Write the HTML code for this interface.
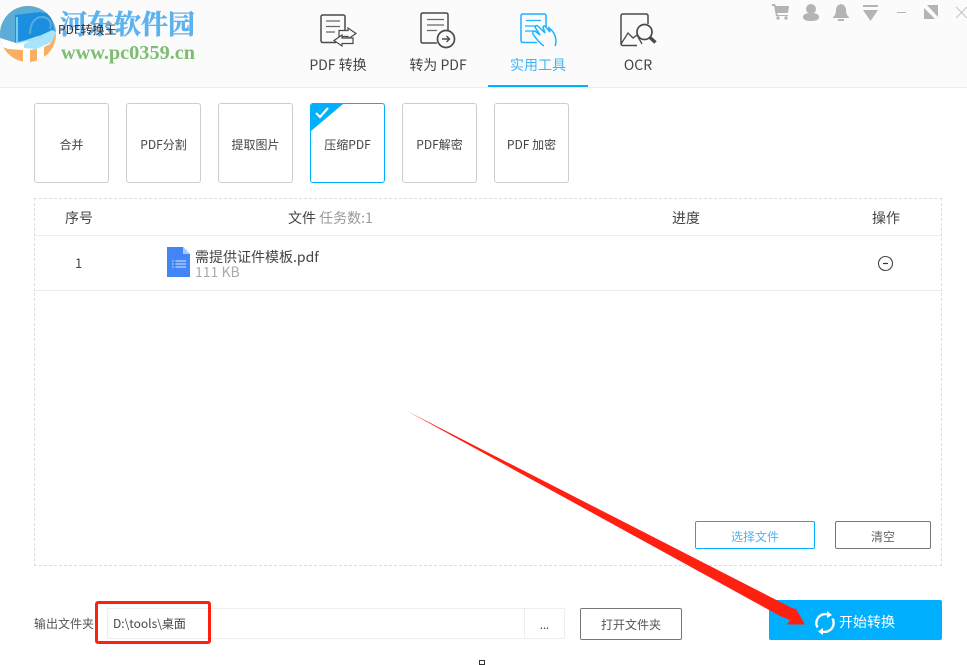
<!DOCTYPE html>
<html><head><meta charset="utf-8">
<style>
html,body{margin:0;padding:0;background:#fff}
body{width:967px;height:663px;position:relative;overflow:hidden;font-family:"Noto Sans CJK SC","Liberation Sans",sans-serif;color:#444}
.a{position:absolute;white-space:nowrap}
.c{position:absolute;text-align:center;white-space:nowrap}
.tile{position:absolute;top:103px;width:73px;height:78px;border:1px solid #cdcdcd;border-radius:3px;text-align:center;line-height:82px;font-size:12px;color:#444;box-sizing:content-box}
</style></head>
<body>
<div class="a" style="left:0;top:0;width:967px;height:87px;background:#fbfbfb;border-bottom:1px solid #eee"></div>

<!-- logo -->
<svg class="a" style="left:0;top:0" width="70" height="70" viewBox="0 0 70 70">
<defs><clipPath id="lc"><circle cx="28" cy="34" r="28"/></clipPath></defs>
<g clip-path="url(#lc)">
<rect x="0" y="0" width="60" height="70" fill="#f9ae62"/>
<path d="M0 0H60V32L30 46L0 44Z" fill="#5cacd8"/>
<path d="M15 15L40 12L50 14L54 30L20 42L15 44Z" fill="#1a8fe0"/>
<path d="M0 38L16 43L54 32L56 33L50 44L44 47V64H37V49L30 50V64H23V50L8 49L0 46Z" fill="#fff"/>
<path d="M24 44L52 30L56 32L52 42L36 49L24 48Z" fill="#a8e4fb"/>
<path d="M17 17V43L44 37" fill="none" stroke="#9fdcf5" stroke-width="1.5"/>
<path d="M30 34C30 22 36 17 42 17C50 17 52 24 50 29" fill="none" stroke="#5cacd8" stroke-width="2"/>
</g>
</svg>
<div class="a" style="left:60px;top:7px;font:bold 27px/32px 'Noto Serif CJK SC','Liberation Serif',serif;color:#5db2ee;-webkit-text-stroke:.5px #5db2ee">河东软件园</div>
<div class="a" style="left:61px;top:42px;font:bold 20.3px/22px 'Liberation Serif',serif;color:#7dbd70">www.pc0359.cn</div>
<div class="a" style="left:58px;top:21px;font-size:12px;line-height:17px;color:#333">PDF转换王</div>

<!-- tab icons -->
<svg class="a" style="left:300px;top:0" width="370" height="60" viewBox="0 0 370 60" fill="none">
<g stroke="#4a4a4a" stroke-width="1.5">
<path d="M36 42.500H23Q21 42.500 21 40.500V17Q21 15 23 15H43Q45 15 45 17V30"/>
<path d="M26 21H40M26 26.500H40M26 32H35" stroke="#666" stroke-width="1.300"/>
<path d="M39 30.500H48V28L56 33.500L48 39V36.500H39Z" fill="#fbfbfb" stroke-width="1.200"/>
<path d="M53 38H42V35L34 40.500L42 46V43.500H53Z" fill="#fbfbfb" stroke-width="1.200"/>
</g>
<g stroke="#4a4a4a" stroke-width="1.5">
<path d="M137 43H123Q121 43 121 41V15Q121 13 123 13H146Q148 13 148 15V30"/>
<path d="M127 19.500H144M127 25H144M127 30.500H137" stroke="#666" stroke-width="1.300"/>
<circle cx="146" cy="39" r="8.500" fill="#fbfbfb" stroke-width="1.700"/>
<path d="M142 39H149.500M146.500 36L149.500 39L146.500 42" stroke-width="1.400"/>
</g>
<g stroke="#1ab3ff" stroke-width="1.500">
<path d="M237 42.500H223Q221 42.500 221 40.500V16Q221 14 223 14H244Q246 14 246 16V27"/>
<path d="M226 20.500H241M225 26H237M225 31H233" stroke-width="1.300"/>
<path d="M244 46Q239 43 233 34Q232 31 235 31L240 35L235 27Q235 25 238 26L245 33L243 27Q244 25 246 27L250 32L249 28Q256 33 256 42Q256 44 255 46" fill="#fbfbfb"/>
</g>
<g stroke="#4a4a4a" stroke-width="1.500">
<path d="M337 45.500H323Q321 45.500 321 43.500V16Q321 14 323 14H346Q348 14 348 16V24"/>
<path d="M321 44L328 33L333 38L337 35L342 44" stroke-width="1.300"/>
<circle cx="344.500" cy="32" r="7.500" fill="#fbfbfb" stroke-width="1.700"/>
<path d="M350 37.500L355.500 42.500" stroke-width="3.400"/>
</g>
</svg>
<div class="c" style="left:298px;top:56px;width:80px;font-size:14px;line-height:18px;color:#444">PDF 转换</div>
<div class="c" style="left:398px;top:56px;width:80px;font-size:14px;line-height:18px;color:#444">转为 PDF</div>
<div class="c" style="left:498px;top:56px;width:80px;font-size:14px;line-height:18px;color:#3db5fa">实用工具</div>
<div class="c" style="left:598px;top:56px;width:80px;font-size:14px;line-height:18px;color:#444">OCR</div>
<div class="a" style="left:488px;top:85px;width:100px;height:2px;background:#00b0ff"></div>

<!-- window controls -->
<svg class="a" style="left:760px;top:0" width="207" height="24" viewBox="0 0 207 24">
<g fill="#b4b4b4">
<path d="M12 4H15L16 6H29L28 13H17L18 15H28V16H16L14 6H12Z"/><circle cx="18" cy="18" r="1.700"/><circle cx="26" cy="18" r="1.700"/>
<circle cx="51" cy="9" r="5"/><path d="M43 17Q43 13 51 13Q59 13 59 17Q59 21 51 21Q43 21 43 17Z"/>
<path d="M73 17Q76 15 76 10Q76 5 81 4Q86 5 86 10Q86 15 89 17V18H73Z"/><rect x="78" y="19" width="6" height="2"/>
<rect x="103" y="5" width="15" height="2"/><path d="M103 10H118L110.500 21Z"/>
<rect x="137" y="12" width="9" height="1"/>
<path d="M167 5H178V17Z"/><path d="M164 8V19H175Z"/>
</g>
<path d="M196 7L207 18M207 7L196 18" stroke="#c4c4c4" stroke-width="1"/>
</svg>

<!-- tiles -->
<div class="tile" style="left:34px">合并</div>
<div class="tile" style="left:126px">PDF分割</div>
<div class="tile" style="left:218px">提取图片</div>
<div class="tile" style="left:310px;border-color:#00b0ff;overflow:hidden">压缩PDF
<svg style="position:absolute;left:0;top:0" width="34" height="28"><path d="M0 0H32L0 27Z" fill="#00b0ff"/><path d="M5 9L9 13L17 4" fill="none" stroke="#fff" stroke-width="2.200"/></svg>
</div>
<div class="tile" style="left:402px">PDF解密</div>
<div class="tile" style="left:494px">PDF 加密</div>

<!-- table -->
<div class="a" style="left:34px;top:198px;width:906px;height:366px;border:1px dashed #ddd"></div>
<div class="a" style="left:35px;top:235px;width:906px;height:1px;background:#ececec"></div>
<div class="a" style="left:35px;top:290px;width:906px;height:1px;background:#ececec"></div>
<div class="a" style="left:65px;top:209px;font-size:14px;line-height:18px;color:#444">序号</div>
<div class="a" style="left:288px;top:209px;font-size:14px;line-height:18px;color:#444">文件 <span style="color:#999">任务数:1</span></div>
<div class="a" style="left:672px;top:209px;font-size:14px;line-height:18px;color:#444">进度</div>
<div class="a" style="left:872px;top:209px;font-size:14px;line-height:18px;color:#444">操作</div>
<div class="a" style="left:75px;top:254px;font-size:13px;line-height:18px;color:#444">1</div>
<svg class="a" style="left:167px;top:247px" width="23" height="30" viewBox="0 0 23 30">
<path d="M0 0H16L23 7V30H0Z" fill="#4285f4"/><path d="M16 0L23 7H16Z" fill="#a9c8fb"/>
<path d="M8.500 14H19M8.500 17H19M8.500 20H19M5 14H6.500M5 17H6.500M5 20H6.500" stroke="#dbe8fd" stroke-width="1"/>
</svg>
<div class="a" style="left:195px;top:249px;font-size:14px;line-height:17px;color:#444">需提供证件模板.pdf</div>
<div class="a" style="left:195px;top:264px;font-size:14px;line-height:17px;color:#aaa">111 KB</div>
<svg class="a" style="left:877px;top:255px" width="17" height="17"><circle cx="8.500" cy="8.500" r="7" fill="none" stroke="#444" stroke-width="1.100"/><path d="M6 8.500H11" stroke="#333" stroke-width="1.200"/></svg>

<div class="c" style="left:695px;top:521px;width:118px;height:26px;border:1px solid #00b0ff;border-radius:2px;font-size:12px;line-height:29px;color:#4db5f5">选择文件</div>
<div class="c" style="left:835px;top:521px;width:94px;height:26px;border:1px solid #777;border-radius:2px;font-size:12px;line-height:29px;color:#666">清空</div>

<!-- footer -->
<div class="a" style="left:34px;top:615px;font-size:12px;line-height:17px;color:#555">输出文件夹</div>
<div class="a" style="left:107px;top:608px;width:456px;height:29px;border:1px solid #eee;border-radius:2px"></div>
<div class="a" style="left:524px;top:608px;width:1px;height:31px;background:#eee"></div>
<div class="a" style="left:113px;top:615px;font-size:12px;line-height:18px;color:#444">D:\tools\桌面</div>
<div class="c" style="left:525px;top:616px;width:39px;font-size:11px;line-height:18px;color:#444">...</div>
<div class="c" style="left:580px;top:608px;width:100px;height:30px;border:1px solid #777;border-radius:2px;font-size:12px;line-height:32px;color:#555">打开文件夹</div>
<div class="a" style="left:769px;top:600px;width:173px;height:40px;background:#00b0ff;border-radius:2px"></div>
<div class="a" style="left:839px;top:613px;font-size:14px;line-height:19px;color:#fff">开始转换</div>
<svg class="a" style="left:814px;top:610px" width="24" height="26" viewBox="0 0 24 26" fill="none">
<path d="M3.500 17.500A9 9 0 0 1 14 4.500" stroke="#fff" stroke-width="2.300"/><path d="M18.500 8.500A9 9 0 0 1 8 21.500" stroke="#fff" stroke-width="2.300"/>
<path d="M13 1L18 5L13 8ZM9 18L4 21.500L9 25Z" fill="#fff"/>
</svg>
<div class="a" style="left:479px;top:660px;width:6px;height:5px;border:1px solid #333;box-sizing:border-box"></div>

<!-- annotations -->
<div class="a" style="left:95px;top:601px;width:110px;height:37px;border:3px solid #ff2012;border-radius:3px"></div>
<svg class="a" style="left:0;top:0;pointer-events:none" width="967" height="663">
<path d="M407 411L792 608L796 609L805 624.500L787 624.500L790 620L780 616Z" fill="#ff2012"/>
</svg>
</body></html>
